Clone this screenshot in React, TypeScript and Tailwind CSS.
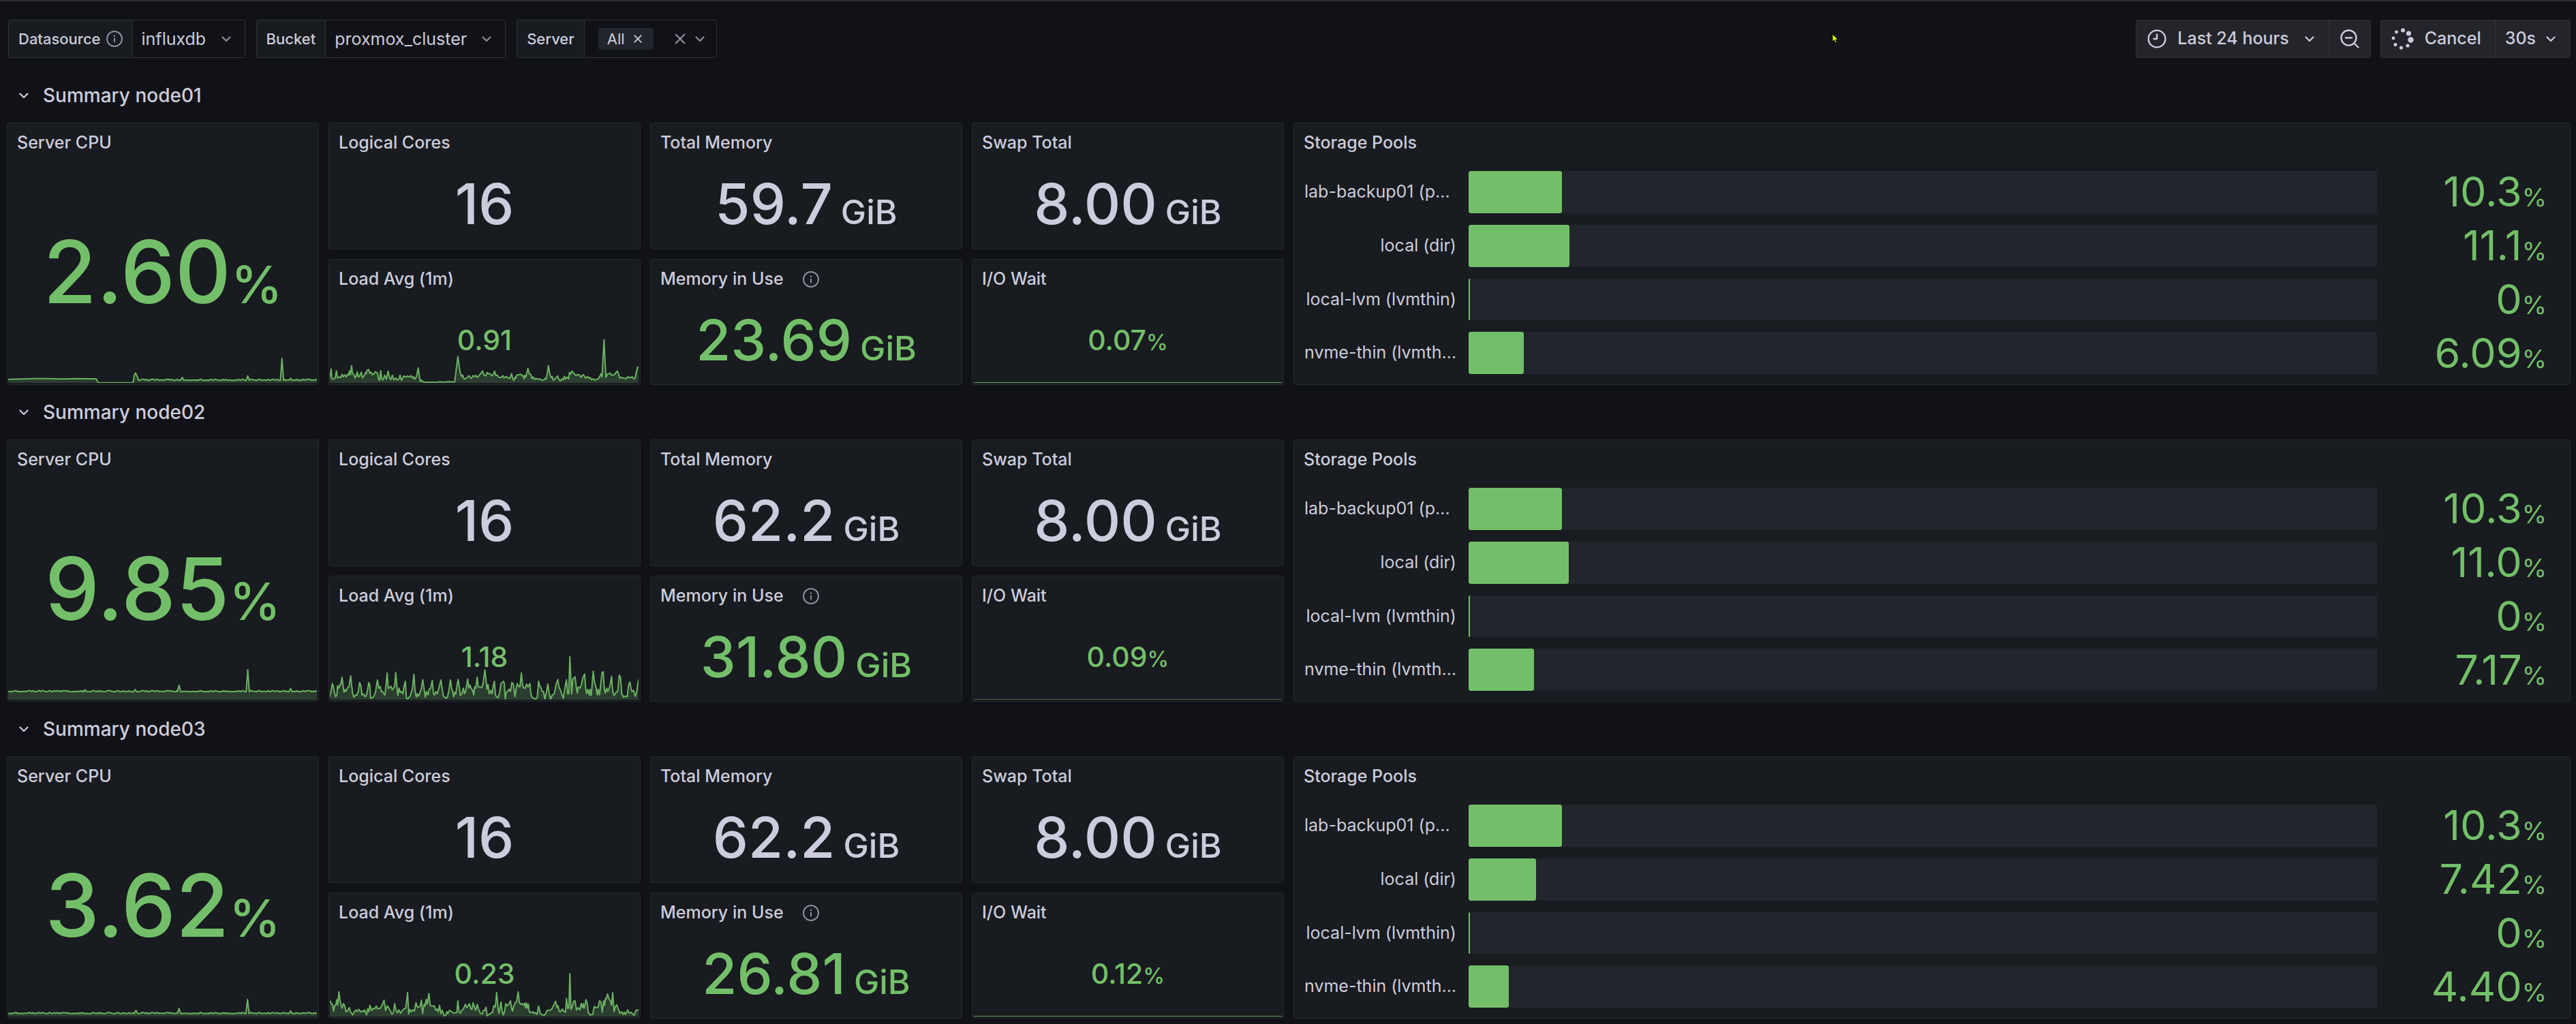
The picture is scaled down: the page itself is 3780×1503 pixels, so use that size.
import React from "react";

type Spike = [number, number];

const PLOT_WIDTH = 1362;

/* Small deterministic jitter, so that the quiet series look alive without a random source. */
const jitter = (i: number) => {
  const s = Math.sin(i * 12.9898) * 43758.5453;
  return s - Math.floor(s);
};

/* Builds a mostly level series; heights are measured up from the base line. */
function levelSeries(from: number, to: number, level: number, noise: number, spikes: Spike[]): string {
  const points: Spike[] = [];
  for (let x = from; x <= to; x += 6) {
    if (spikes.some(([sx]) => Math.abs(sx - x) < 10)) continue;
    const j = jitter(x);
    points.push([x, level + (j > 0.65 ? noise : j > 0.3 ? 0 : noise / 3)]);
  }
  spikes.forEach(([x, h]) => {
    points.push([x - 7, level], [x, h], [x + 7, level]);
  });
  points.sort((a, b) => a[0] - b[0]);
  return points.map(([x, h]) => `${x},${200 - h}`).join(" ");
}

const cpu1 =
  "0,184 60,183 120,181 180,181 240,183 300,181 360,182 388,182 397,199 551,199 556,168 562,156 570,174 576,189 " +
  levelSeries(582, 1362, 11, 5, [[768, 24], [1057, 31], [1208, 108], [1246, 21]]);
const cpu2 = levelSeries(0, 1362, 35, 5, [[340, 44], [560, 45], [754, 64], [1057, 132], [1246, 49]]);
const cpu3 = levelSeries(0, 1362, 13, 4, [[564, 27], [754, 36], [1056, 75], [1246, 25]]);

const load1 =
  "40,232 43,215 48,185 51,225 55,230 65,226 71,193 76,224 84,220 90,222 96,208 101,219 108,210 114,220 122,206 125,212 129,193 133,210 138,170 142,205 148,209 153,224 157,220 163,197 168,220 174,215 181,199 186,224 195,212 200,200 203,205 207,190 213,187 218,203 224,199 229,210 236,207 243,197 252,203 257,230 262,235 266,192 271,228 277,233 284,212 291,230 299,194 305,222 311,232 318,212 324,233 333,224 340,234 346,230 352,212 358,235 368,216 376,220 384,216 392,220 400,214 406,224 411,219 416,230 420,225 425,215 432,180 438,225 442,240 447,234 453,241 460,243 520,243 527,240 534,243 570,241 593,242 598,200 607,130 613,175 618,205 624,218 628,212 634,228 640,228 648,222 656,214 663,226 668,224 674,214 682,218 686,213 694,222 702,212 716,194 722,212 730,215 736,200 741,206 748,205 757,215 764,207 769,194 774,214 780,211 788,222 798,222 805,214 811,224 820,218 829,224 836,226 844,205 849,230 854,235 859,221 862,226 866,212 875,210 884,208 893,214 899,228 902,212 907,220 916,182 922,207 928,208 934,228 939,220 946,231 952,226 960,230 968,228 976,234 986,233 992,226 996,229 1000,212 1006,170 1013,210 1018,222 1023,218 1028,235 1038,226 1047,215 1051,228 1059,237 1067,228 1073,232 1077,217 1081,228 1089,220 1096,228 1099,200 1105,207 1110,194 1120,205 1128,214 1135,209 1144,212 1150,222 1155,213 1161,210 1170,225 1178,218 1184,225 1190,222 1196,232 1203,228 1209,233 1216,232 1222,230 1231,222 1239,205 1243,220 1247,140 1252,56 1256,150 1260,222 1266,208 1278,203 1284,212 1290,211 1297,210 1310,194 1315,204 1321,224 1330,222 1340,226 1350,227 1356,219 1366,224 1376,219 1384,229 1390,222 1395,195 1400,176 1404,180";
const load2 =
  "40,252 45,235 53,190 58,205 63,235 68,248 73,240 76,200 81,210 86,196 90,195 96,162 101,205 105,228 109,217 114,224 120,208 126,206 134,156 139,205 143,235 148,250 155,240 160,243 168,222 173,186 178,195 184,240 191,236 198,248 204,240 208,220 214,186 218,195 222,255 230,252 236,246 244,225 252,174 258,210 264,203 269,225 274,224 280,235 285,240 289,205 295,143 300,212 308,205 312,202 317,218 325,208 328,200 333,142 338,205 342,242 347,210 352,228 358,225 364,235 369,205 375,180 380,255 385,258 390,252 396,246 401,230 406,215 413,149 418,225 424,250 428,235 434,245 440,230 445,215 452,173 458,215 463,250 468,225 475,240 480,215 486,212 494,176 499,235 504,240 510,225 516,235 522,215 532,174 538,215 543,245 549,250 556,255 562,245 568,215 574,174 579,210 584,225 588,248 594,228 598,235 603,200 608,172 613,205 618,243 624,235 631,210 636,235 642,220 650,170 655,210 660,196 665,210 672,220 677,240 681,205 686,210 692,162 697,205 704,205 712,208 718,190 722,160 726,130 731,175 736,215 740,195 745,235 752,220 758,235 763,200 768,180 773,240 778,250 785,252 792,225 797,190 801,186 808,180 812,190 816,258 820,230 828,222 833,215 839,225 845,185 852,195 859,248 864,215 869,190 874,200 881,205 887,143 892,195 897,210 904,210 910,192 916,205 925,190 929,235 934,250 942,256 950,258 957,250 963,180 968,200 974,210 979,225 984,225 991,258 998,225 1004,192 1009,230 1016,258 1024,240 1032,235 1040,195 1048,172 1053,205 1060,220 1066,240 1072,255 1078,215 1086,173 1091,235 1096,235 1101,72 1106,180 1109,235 1114,170 1124,160 1130,210 1134,232 1138,205 1146,210 1152,195 1158,165 1166,148 1171,215 1175,235 1180,215 1186,240 1190,215 1195,243 1199,200 1204,136 1210,185 1216,205 1222,240 1226,215 1232,240 1238,185 1243,142 1248,138 1253,215 1258,232 1263,210 1269,225 1274,212 1279,195 1285,158 1290,225 1296,243 1304,230 1312,225 1319,153 1325,165 1330,235 1338,250 1345,245 1354,248 1360,195 1366,184 1371,215 1376,225 1382,220 1390,246 1396,225 1404,172";
const load3 =
  "40,270 44,272 50,285 54,285 58,316 64,290 68,290 73,265 77,290 82,230 87,270 92,290 96,302 102,282 108,292 113,318 120,315 128,300 133,318 143,332 150,318 157,310 163,318 170,308 177,318 184,315 190,318 195,310 204,332 209,305 214,318 219,290 226,312 234,303 240,305 247,293 253,305 265,302 272,290 281,267 288,312 295,292 302,302 308,312 315,328 322,325 328,283 334,312 340,322 347,310 354,325 362,312 370,305 377,302 385,234 390,328 395,308 402,318 408,310 415,315 422,278 428,298 440,296 446,267 451,326 458,285 462,292 467,264 472,285 479,238 485,290 492,294 503,292 510,312 516,306 520,318 526,290 532,326 538,312 546,335 552,335 558,318 563,326 570,312 580,318 590,324 602,322 607,270 612,318 618,325 624,312 632,305 640,285 646,300 652,292 658,283 664,305 669,308 674,278 680,298 686,312 692,286 698,305 706,325 714,328 720,312 726,312 731,298 736,336 744,330 752,325 760,320 765,292 772,298 778,234 784,300 788,325 793,300 797,275 802,318 808,332 814,312 818,282 822,292 832,285 839,270 843,300 848,315 853,292 860,278 866,275 873,230 878,278 884,285 890,282 897,290 902,280 906,302 910,280 914,302 918,284 922,318 930,322 938,318 944,326 950,322 956,330 963,293 970,325 976,330 986,334 994,328 1000,312 1010,312 1020,308 1038,272 1044,300 1049,292 1054,316 1060,318 1068,306 1074,316 1082,320 1086,260 1092,305 1097,300 1101,150 1106,308 1112,295 1118,272 1124,270 1130,310 1138,300 1145,310 1151,282 1156,300 1161,282 1164,302 1169,285 1172,265 1178,282 1182,320 1190,332 1202,330 1208,295 1214,300 1226,298 1232,270 1238,275 1244,320 1250,270 1254,290 1258,260 1262,262 1267,240 1274,262 1280,270 1285,290 1290,234 1296,318 1302,295 1308,288 1314,305 1322,325 1330,318 1336,330 1342,320 1346,330 1351,322 1356,310 1363,325 1370,320 1378,328 1384,334 1390,318 1395,310 1404,312";

interface Series {
  points: string;
  left: number;
  base: number;
}

interface NodeData {
  name: string;
  cpu: string;
  cpuSeries: Series;
  load: string;
  loadSeries: Series;
  memTotal: string;
  memUsed: string;
  ioWait: string;
  ioLine: string;
  pools: { name: string; value: string }[];
}

const nodes: NodeData[] = [
  {
    name: "Summary node01",
    cpu: "2.60",
    cpuSeries: { points: cpu1, left: 0, base: 200 },
    load: "0.91",
    loadSeries: { points: load1, left: 42, base: 246 },
    memTotal: "59.7",
    memUsed: "23.69",
    ioWait: "0.07",
    ioLine: "bg-[#63a35b]",
    pools: [
      { name: "lab-backup01 (p…", value: "10.3" },
      { name: "local (dir)", value: "11.1" },
      { name: "local-lvm (lvmthin)", value: "0" },
      { name: "nvme-thin (lvmth…", value: "6.09" },
    ],
  },
  {
    name: "Summary node02",
    cpu: "9.85",
    cpuSeries: { points: cpu2, left: 0, base: 200 },
    load: "1.18",
    loadSeries: { points: load2, left: 42, base: 261 },
    memTotal: "62.2",
    memUsed: "31.80",
    ioWait: "0.09",
    ioLine: "bg-[#41663f]",
    pools: [
      { name: "lab-backup01 (p…", value: "10.3" },
      { name: "local (dir)", value: "11.0" },
      { name: "local-lvm (lvmthin)", value: "0" },
      { name: "nvme-thin (lvmth…", value: "7.17" },
    ],
  },
  {
    name: "Summary node03",
    cpu: "3.62",
    cpuSeries: { points: cpu3, left: 0, base: 200 },
    load: "0.23",
    loadSeries: { points: load3, left: 42, base: 339 },
    memTotal: "62.2",
    memUsed: "26.81",
    ioWait: "0.12",
    ioLine: "bg-[#63a35b]",
    pools: [
      { name: "lab-backup01 (p…", value: "10.3" },
      { name: "local (dir)", value: "7.42" },
      { name: "local-lvm (lvmthin)", value: "0" },
      { name: "nvme-thin (lvmth…", value: "4.40" },
    ],
  },
];

function Chevron({ className = "" }: { className?: string }) {
  return (
    <svg viewBox="0 0 24 24" className={`size-6 shrink-0 ${className}`} fill="none" stroke="currentColor" strokeWidth="2.2" strokeLinecap="round" strokeLinejoin="round" aria-hidden="true">
      <path d="M6.5 9.5 12 15l5.5-5.5" />
    </svg>
  );
}

function Cross({ className = "" }: { className?: string }) {
  return (
    <svg viewBox="0 0 16 16" className={className} fill="none" stroke="currentColor" strokeWidth="2" strokeLinecap="round" aria-hidden="true">
      <path d="m2.5 2.5 11 11m0-11-11 11" />
    </svg>
  );
}

function InfoIcon() {
  return (
    <svg viewBox="0 0 24 24" className="size-6 shrink-0 text-[#8e8e9b]" fill="none" stroke="currentColor" strokeWidth="2" strokeLinecap="round" aria-hidden="true">
      <circle cx="12" cy="12" r="11" />
      <path d="M12 11.5v5" />
      <circle cx="12" cy="7.8" r="1.3" fill="currentColor" stroke="none" />
    </svg>
  );
}

function ClockIcon() {
  return (
    <svg viewBox="0 0 28 28" className="size-7 shrink-0" fill="none" stroke="currentColor" strokeWidth="2.4" strokeLinecap="round" strokeLinejoin="round" aria-hidden="true">
      <circle cx="14" cy="14" r="12.4" />
      <path d="M14 7.5V14H9.5" />
    </svg>
  );
}

function ZoomOutIcon() {
  return (
    <svg viewBox="0 0 28 28" className="size-7 shrink-0" fill="none" stroke="currentColor" strokeWidth="2.4" strokeLinecap="round" aria-hidden="true">
      <circle cx="12.5" cy="12.5" r="11" />
      <path d="M8 12.5h9M20.5 20.5l6 6" />
    </svg>
  );
}

function SpinnerIcon() {
  return (
    <svg viewBox="0 0 34 34" className="size-[34px] shrink-0" fill="currentColor" aria-hidden="true">
      <circle cx="18" cy="4.5" r="3" />
      <circle cx="26.5" cy="9" r="3.6" />
      <circle cx="29.5" cy="18.5" r="4.2" />
      <circle cx="25" cy="27" r="2.6" />
      <circle cx="15.5" cy="30" r="2.6" />
      <circle cx="7" cy="25.5" r="2.5" />
      <circle cx="4" cy="16" r="2.4" />
      <circle cx="8.5" cy="7" r="2.4" />
    </svg>
  );
}

function VariableSelect({ id, label, value, info }: { id: string; label: string; value: string; info?: boolean }) {
  return (
    <div className="flex h-14">
      <label htmlFor={id} className="flex items-center gap-2 rounded-l-[3px] border border-[#303236] bg-[#181b1f] px-[14px] text-[22px] font-medium">
        {label}
        {info && <InfoIcon />}
      </label>
      <div className="relative -ml-px flex">
        <select id={id} className="appearance-none rounded-r-[3px] border border-[#303236] bg-[#111217] pl-[13px] pr-14 pt-0.5 text-[25px] text-[#ccccdc]">
          <option>{value}</option>
        </select>
        <Chevron className="pointer-events-none absolute right-4 top-4 text-[#8e8e9b]" />
      </div>
    </div>
  );
}

function ServerPicker() {
  return (
    <div className="flex h-14" role="group" aria-label="Server">
      <span className="flex items-center rounded-l-[3px] border border-[#303236] bg-[#181b1f] px-[14px] text-[22px] font-medium">Server</span>
      <div className="-ml-px flex items-center rounded-r-[3px] border border-[#303236] pl-5 pr-3">
        <span className="flex h-8 items-center gap-3 rounded-[3px] bg-[#22252b] pl-[13px] pr-4 text-[22px]">
          All
          <button aria-label="Remove All">
            <Cross className="size-[14px]" />
          </button>
        </span>
        <button aria-label="Clear" className="ml-[30px] text-[#8e8e9b]">
          <Cross className="size-[18px]" />
        </button>
        <button aria-label="Open server list" className="ml-2 text-[#8e8e9b]">
          <Chevron />
        </button>
      </div>
    </div>
  );
}

function Toolbar() {
  return (
    <header className="flex items-start justify-between">
      <div className="flex gap-4 pl-0.5">
        <VariableSelect id="datasource" label="Datasource" value="influxdb" info />
        <VariableSelect id="bucket" label="Bucket" value="proxmox_cluster" />
        <ServerPicker />
      </div>
      <div className="flex gap-[14px] text-[25px] font-medium">
        <div className="flex h-14 rounded-[3px] border border-[#2f3136] bg-[#24252b]">
          <button className="flex items-center gap-4 px-4">
            <ClockIcon />
            Last 24 hours
            <Chevron className="ml-0.5" />
          </button>
          <button aria-label="Zoom out time range" className="flex items-center border-l border-[#33353a] px-4">
            <ZoomOutIcon />
          </button>
        </div>
        <div className="flex h-14 rounded-[3px] border border-[#2f3136] bg-[#24252b]">
          <button className="flex items-center gap-4 pl-[14px] pr-5">
            <SpinnerIcon />
            Cancel
          </button>
          <button className="flex items-center gap-[10px] border-l border-[#33353a] pl-[14px] pr-4">
            30s
            <Chevron />
          </button>
        </div>
      </div>
    </header>
  );
}

function Panel({ title, info, className = "", children }: { title: string; info?: boolean; className?: string; children: React.ReactNode }) {
  return (
    <section className={`relative flex min-w-0 flex-col rounded-[3px] border border-[#25282d] bg-[#181b1f] ${className}`}>
      <h3 className="flex h-14 shrink-0 items-center gap-7 px-[14px] pt-0.5 text-[25px] font-medium">
        {title}
        {info && <InfoIcon />}
      </h3>
      {children}
    </section>
  );
}

function Sparkline({ series }: { series: Series }) {
  const { points, left, base } = series;
  return (
    <svg
      viewBox={`${left} ${base - 201} ${PLOT_WIDTH} 201`}
      preserveAspectRatio="none"
      className="absolute inset-x-px bottom-0.5 h-[67px] w-[calc(100%-3px)]"
      aria-hidden="true"
    >
      <polygon points={`${left},${base} ${points} ${left + PLOT_WIDTH},${base}`} fill="#2b3d2f" />
      <polyline points={points} fill="none" stroke="#6bb062" strokeWidth="2" strokeLinejoin="round" vectorEffect="non-scaling-stroke" />
    </svg>
  );
}

function Big({ value, unit, sizes, green }: { value: string; unit?: string; sizes: [string, string]; green?: boolean }) {
  return (
    <div className={`relative flex flex-1 items-center justify-center pb-0.5 ${green ? "text-[#73bf69]" : ""}`}>
      <p className="flex items-baseline font-medium leading-none">
        <span className={sizes[0]}>{value}</span>
        {unit && <span className={sizes[1]}>{unit}</span>}
      </p>
    </div>
  );
}

const HUGE: [string, string] = ["text-[127px] leading-none", "text-[76px] leading-none"];
const LARGE: [string, string] = ["text-[83px] leading-none", "ml-3 text-[50px] leading-none"];
const SMALL: [string, string] = ["text-[41px] leading-none", "text-[32px] leading-none"];

function StoragePools({ pools }: { pools: NodeData["pools"] }) {
  return (
    <ul className="flex flex-1 flex-col gap-[17px] pb-[15px] pl-[15px] pr-[34px] pt-[14px]">
      {pools.map((pool) => (
        <li key={pool.name} className="flex flex-1 items-center">
          <span className={`w-[223px] whitespace-nowrap text-[25px] ${pool.name.startsWith("lab") ? "text-left" : "text-right"}`}>{pool.name}</span>
          <div className="ml-[18px] flex-1 self-stretch rounded-[3px] bg-[#22252b]">
            <div className="h-full min-w-0.5 rounded-[3px] border border-[#73bf69] bg-[#73bf69]" style={{ width: `${pool.value}%` }} />
          </div>
          <span className="flex w-[249px] items-baseline justify-end text-[61px] leading-none text-[#73bf69]">
            {pool.value}
            <span className="text-[37px] leading-none">%</span>
          </span>
        </li>
      ))}
    </ul>
  );
}

function NodeSection({ node }: { node: NodeData }) {
  return (
    <section className="flex flex-col gap-[14px]">
      <h2 className="flex h-[52px] items-center">
        <button className="flex items-center gap-4 pl-[13px] text-[28px] font-medium">
          <Chevron />
          {node.name}
        </button>
      </h2>
      <div className="grid h-[385px] grid-cols-8 grid-rows-2 gap-[14px]">
        <Panel title="Server CPU" className="row-span-2">
          <Sparkline series={node.cpuSeries} />
          <Big value={node.cpu} unit="%" sizes={HUGE} green />
        </Panel>
        <Panel title="Logical Cores">
          <Big value="16" sizes={LARGE} />
        </Panel>
        <Panel title="Total Memory">
          <Big value={node.memTotal} unit="GiB" sizes={LARGE} />
        </Panel>
        <Panel title="Swap Total">
          <Big value="8.00" unit="GiB" sizes={LARGE} />
        </Panel>
        <Panel title="Storage Pools" className="col-span-4 row-span-2">
          <StoragePools pools={node.pools} />
        </Panel>
        <Panel title="Load Avg (1m)">
          <Sparkline series={node.loadSeries} />
          <Big value={node.load} sizes={SMALL} green />
        </Panel>
        <Panel title="Memory in Use" info>
          <Big value={node.memUsed} unit="GiB" sizes={LARGE} green />
        </Panel>
        <Panel title="I/O Wait">
          <div className={`absolute inset-x-0.5 bottom-0.5 h-px ${node.ioLine}`} />
          <Big value={node.ioWait} unit="%" sizes={SMALL} green />
        </Panel>
      </div>
    </section>
  );
}

export default function App() {
  return (
    <main className="relative min-h-screen border-t-2 border-[#2a2c32] bg-[#111217] pb-2 pl-[10px] pr-2 pt-[27px] font-['Inter',sans-serif] text-[#ccccdc]">
      <Toolbar />
      <div className="mt-[29px] flex flex-col gap-[14px]">
        {nodes.map((node) => (
          <NodeSection key={node.name} node={node} />
        ))}
      </div>
      <svg viewBox="0 0 10 15" className="absolute left-[71.1%] top-[47px] h-[15px] w-[10px]" aria-hidden="true">
        <path d="M1 1v11l2.6-2.2 2 4.2 1.8-.9-2-4H9z" fill="#d4ff00" stroke="#000" strokeWidth=".8" />
      </svg>
    </main>
  );
}
